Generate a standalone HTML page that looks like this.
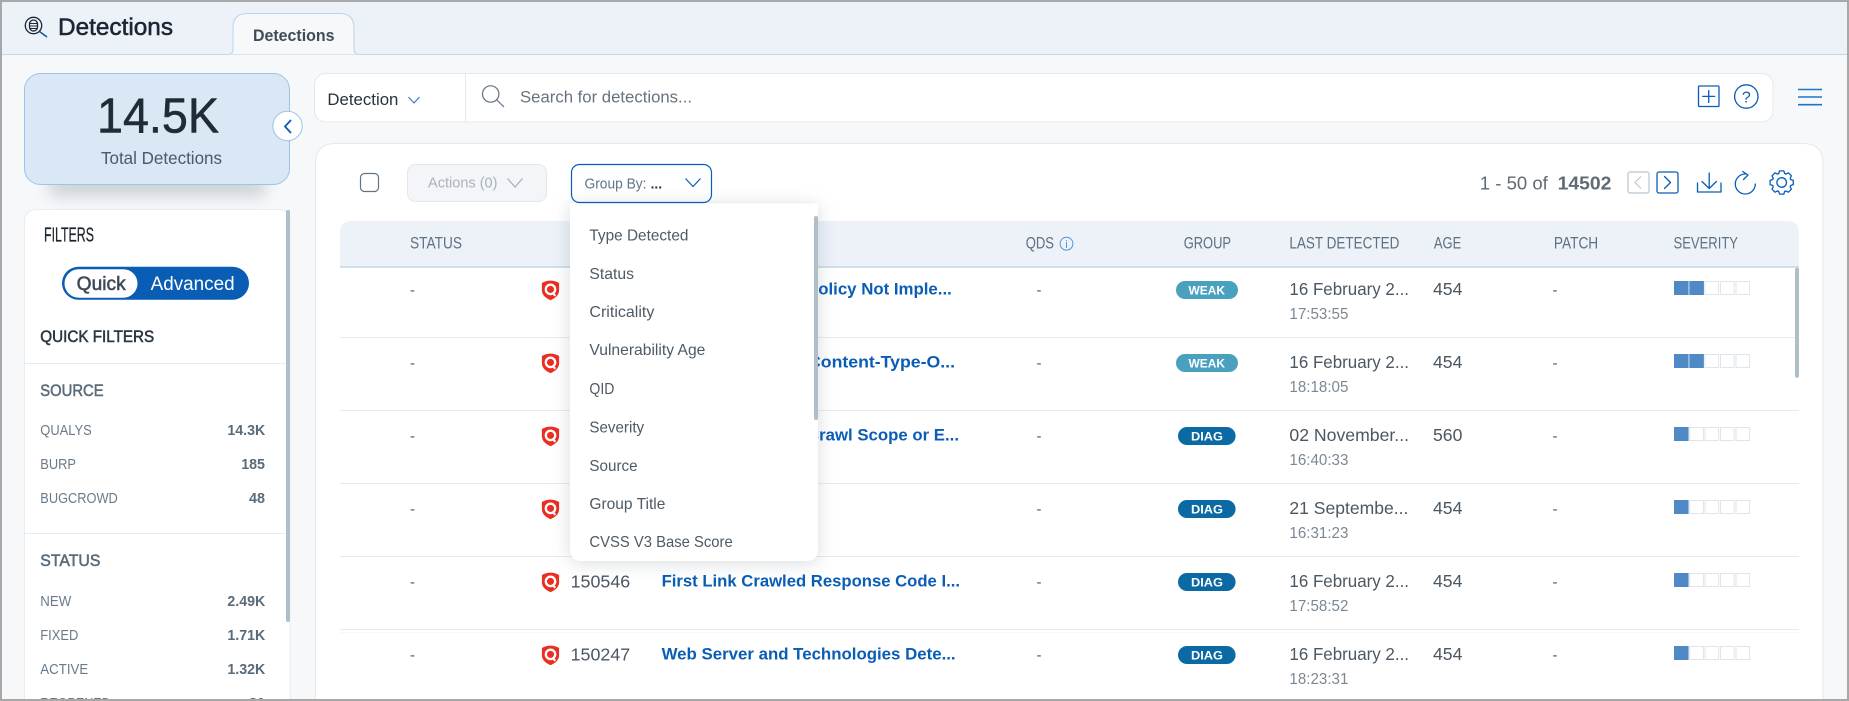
<!DOCTYPE html>
<html lang="en"><head><meta charset="utf-8"><title>Detections</title>
<style>
html,body{margin:0;padding:0;background:#f6f8fa;width:1849px;height:701px;overflow:hidden}
svg{display:block}
text{font-family:"Liberation Sans",Arial,sans-serif;white-space:pre}
.m{stroke:currentColor;stroke-width:.55px}
.hd{font-size:16.5px;fill:#5f7080}
.it{font-size:16px;fill:#4e5a66}
.tt{font-size:17px;font-weight:bold;fill:#0a5db5}
.qid{font-size:17.5px;fill:#4b5763}
.dt{font-size:17.5px;fill:#4b5763}
.tm{font-size:15.5px;fill:#7a8894}
.ds{font-size:15px;fill:#4b5763}
.bw{font-size:12px;font-weight:bold;fill:#fff}
.fl{font-size:14.5px;fill:#6b7a88}
.fv{font-size:14.5px;font-weight:bold;fill:#5a6b7a}
.fh{font-size:17px;fill:#5a6b7a;color:#5a6b7a}
.ic{fill:none;stroke:#0a5db5;stroke-width:1.3;stroke-linecap:round;stroke-linejoin:round}
.on{fill:#4f8ac6}.of{fill:#fff;stroke:#dfe5eb;stroke-width:1}
</style></head><body>
<svg width="1849" height="701" viewBox="0 0 1849 701" xmlns="http://www.w3.org/2000/svg">
<defs>
<filter id="b1" x="-30%" y="-100%" width="160%" height="300%"><feGaussianBlur stdDeviation="8"/></filter>
<g id="sh">
<path d="M0,-9.8C3.2,-9.8 6,-9 8.6,-7.4L8.6,0C8.6,4.8 4.4,8 0,9.8C-4.4,8 -8.6,4.8 -8.6,0L-8.6,-7.4C-6,-9 -3.2,-9.8 0,-9.8Z" fill="#ea2e22"/>
<circle cx="0" cy="-1" r="4.7" fill="none" stroke="#fff" stroke-width="2.3"/>
<path d="M2.2,2.6L4.8,5.4" stroke="#fff" stroke-width="2.1"/>
</g>
<path id="t" d="M-3,-9L-2.1,-11.6L2.1,-11.6L3,-9L4.24,-8.49"/>
<g id="b2"><rect x="0" y="0" width="14.6" height="14" class="on"/><rect x="15.3" y="0" width="14.6" height="14" class="on"/><rect x="31" y=".5" width="13.6" height="13" class="of"/><rect x="46.5" y=".5" width="13.6" height="13" class="of"/><rect x="62" y=".5" width="13.6" height="13" class="of"/></g>
<g id="b1s"><rect x="0" y="0" width="14.6" height="14" class="on"/><rect x="15.8" y=".5" width="13.6" height="13" class="of"/><rect x="31" y=".5" width="13.6" height="13" class="of"/><rect x="46.5" y=".5" width="13.6" height="13" class="of"/><rect x="62" y=".5" width="13.6" height="13" class="of"/></g>
</defs>

<!-- page -->
<rect width="1849" height="701" fill="#f6f8fa"/>
<rect x="0" y="0" width="1849" height="54" fill="#edf2f9"/>
<line x1="0" y1="54.5" x2="1849" y2="54.5" stroke="#c5d9ee"/>
<path d="M229,54.5Q233,54 233,48L233,28Q233,13.5 247,13.5L340,13.5Q354,13.5 354,28L354,48Q354,54 358,54.5Z" fill="#f6f8fa" stroke="#bcd3ea"/>
<line x1="230" y1="55" x2="357" y2="55" stroke="#f6f8fa" stroke-width="1"/>
<text x="253" y="41" font-size="17" font-weight="bold" fill="#3f4d5a" textLength="81.5" lengthAdjust="spacingAndGlyphs">Detections</text>
<text x="58" y="35" font-size="24.5" fill="#1c2733" color="#1c2733" class="m" textLength="115" lengthAdjust="spacingAndGlyphs">Detections</text>
<g fill="none" stroke="#1c2733" stroke-width="1.3">
<circle cx="33.5" cy="25.5" r="8.2"/><rect x="29.5" y="20" width="8" height="11" rx="4"/><path d="M30,23.5h7M30,26h7M30,28.5h7" stroke-width="1"/>
</g>
<path d="M39.5,31.5L47,37" stroke="#0a5db5" stroke-width="1.6" fill="none"/>

<!-- total card -->
<rect x="50" y="174" width="215" height="22" fill="#7f8b97" opacity=".36" filter="url(#b1)"/>
<rect x="24.5" y="73.5" width="265" height="111" rx="16" fill="#dae7f4" stroke="#9fc3e6"/>
<text x="97" y="132.5" font-size="48.7" fill="#1f2c38" color="#1f2c38" class="m" textLength="122" lengthAdjust="spacingAndGlyphs">14.5K</text>
<text x="101" y="164" font-size="17.5" fill="#4b5a68" textLength="121" lengthAdjust="spacingAndGlyphs">Total Detections</text>
<circle cx="287.5" cy="126" r="14.7" fill="#fff" stroke="#9fc3e6"/>
<path d="M291,120L285,126.5L291,133" fill="none" stroke="#0a5db5" stroke-width="1.8"/>

<!-- search bar -->
<rect x="314.5" y="73.5" width="1458.5" height="48.5" rx="11" fill="#fff" stroke="#e4e9ee"/>
<line x1="465.5" y1="74" x2="465.5" y2="122" stroke="#e4e9ee"/>
<text x="327.4" y="105" font-size="17" fill="#26323d" textLength="71" lengthAdjust="spacingAndGlyphs">Detection</text>
<path d="M408.5,97L414,103L419.5,97" fill="none" stroke="#3f7fc4" stroke-width="1.2"/>
<circle cx="490.7" cy="94" r="8.2" fill="none" stroke="#5f7080" stroke-width="1.2"/>
<path d="M496.8,100L504,107" stroke="#5f7080" stroke-width="1.2"/>
<text x="520" y="102.5" font-size="17" fill="#66737f" textLength="172" lengthAdjust="spacingAndGlyphs">Search for detections...</text>
<rect x="1698.5" y="86" width="20.5" height="20.5" class="ic" stroke-linejoin="miter" rx="1"/>
<path d="M1708.7,90.5V102.5M1702.7,96.4H1714.7" class="ic" stroke-width="1"/>
<circle cx="1746.3" cy="96.5" r="11.7" class="ic" stroke="#1e74c6"/>
<text x="1746.3" y="102.5" font-size="16" text-anchor="middle" fill="#0a5db5">?</text>
<path d="M1798,89.5H1822M1798,97H1822M1798,104.7H1822" fill="none" stroke="#1e74c6" stroke-width="1.6"/>

<!-- content panel -->
<path d="M315.5,720V163Q315.5,143.5 335.5,143.5H1803Q1823,143.5 1823,163V720Z" fill="#fff" stroke="#e4e9ee"/>
<rect x="360.5" y="173.5" width="18" height="18" rx="4" fill="#fff" stroke="#5f7589" stroke-width="1.2"/>
<rect x="407.5" y="164.5" width="139" height="37" rx="8" fill="#f3f5f8" stroke="#e4e8ed"/>
<text x="428" y="187.7" font-size="15" fill="#a9b2bb" textLength="69.5" lengthAdjust="spacingAndGlyphs">Actions (0)</text>
<path d="M507.5,178.5L515,187L522.5,178.5" fill="none" stroke="#a9b2bb" stroke-width="1.3"/>

<!-- pagination -->
<text x="1479.8" y="189.7" font-size="18" fill="#5f6b76" textLength="68" lengthAdjust="spacingAndGlyphs">1 - 50 of</text>
<text x="1557.6" y="189.7" font-size="18" font-weight="bold" fill="#5f6b76" textLength="53.8" lengthAdjust="spacingAndGlyphs">14502</text>
<rect x="1628" y="172" width="21" height="21" rx="2" fill="#fff" stroke="#b9c5d0" stroke-width="1.2"/>
<path d="M1641,176.5L1635,182.5L1641,188.5" fill="none" stroke="#b9c5d0" stroke-width="1.1"/>
<rect x="1657" y="172" width="21" height="21" rx="2" class="ic"/>
<path d="M1664.5,176.5L1670.5,182.5L1664.5,188.5" class="ic" stroke-width="1.1"/>
<path d="M1697.5,183V192H1721V183M1709.2,173V188.5M1702,181.5L1709.2,188.5L1716.4,181.5" class="ic" stroke-width="1.2" stroke="#1671c4"/>
<path d="M1745.3,174A10,10 0 1 0 1755.3,184" class="ic" stroke="#1e78c8" stroke-width="1.2"/>
<path d="M1742.7,171.5L1748,175L1743.5,179.5" class="ic" stroke="#1e78c8" stroke-width="1.2"/>
<g transform="translate(1781.7,182.5)" class="ic" stroke="#1671c4" stroke-width="1.2">
<use href="#t"/><use href="#t" transform="rotate(45)"/><use href="#t" transform="rotate(90)"/><use href="#t" transform="rotate(135)"/><use href="#t" transform="rotate(180)"/><use href="#t" transform="rotate(225)"/><use href="#t" transform="rotate(270)"/><use href="#t" transform="rotate(315)"/>
<circle r="4.8"/>
</g>

<!-- table header -->
<path d="M340,267V233Q340,221 352,221H1787Q1799,221 1799,233V267Z" fill="#edf2f9"/>
<line x1="340" y1="267" x2="1799" y2="267" stroke="#c5d5e6" stroke-width="1.5"/>
<text x="410" y="248.7" class="hd" textLength="52" lengthAdjust="spacingAndGlyphs">STATUS</text>
<text x="1025.7" y="248.7" class="hd" textLength="28.3" lengthAdjust="spacingAndGlyphs">QDS</text>
<circle cx="1066.5" cy="243.7" r="6.4" fill="none" stroke="#4f93d2" stroke-width="1"/>
<text x="1066.5" y="248" font-size="11" text-anchor="middle" fill="#4f93d2">i</text>
<text x="1183.7" y="248.7" class="hd" textLength="47.3" lengthAdjust="spacingAndGlyphs">GROUP</text>
<text x="1289.4" y="248.7" class="hd" textLength="110" lengthAdjust="spacingAndGlyphs">LAST DETECTED</text>
<text x="1433.9" y="248.7" class="hd" textLength="27.3" lengthAdjust="spacingAndGlyphs">AGE</text>
<text x="1553.9" y="248.7" class="hd" textLength="44.3" lengthAdjust="spacingAndGlyphs">PATCH</text>
<text x="1673.5" y="248.7" class="hd" textLength="64.5" lengthAdjust="spacingAndGlyphs">SEVERITY</text>

<!-- rows -->
<g stroke="#e6ebef" stroke-width="1">
<line x1="340" y1="337.5" x2="1799" y2="337.5"/><line x1="340" y1="410.5" x2="1799" y2="410.5"/><line x1="340" y1="483.5" x2="1799" y2="483.5"/><line x1="340" y1="556.5" x2="1799" y2="556.5"/><line x1="340" y1="629.5" x2="1799" y2="629.5"/>
<line x1="340" y1="632.5" x2="1799" y2="632.5" stroke="#f7f8fa"/>
</g>
<rect x="1795" y="267.7" width="4" height="110" rx="2" fill="#b0bec8"/>

<!-- row 1 -->
<text x="410" y="295" class="ds">-</text><use href="#sh" x="550.5" y="290.4"/>
<text x="807" y="294.7" class="tt" textLength="144.8" lengthAdjust="spacingAndGlyphs">Policy Not Imple...</text>
<text x="1036.5" y="295" class="ds">-</text>
<rect x="1176" y="281" width="62" height="18" rx="9" fill="#4aa1bf"/><text x="1188.5" y="294.5" class="bw" textLength="36.5" lengthAdjust="spacingAndGlyphs">WEAK</text>
<text x="1289.4" y="295" class="dt" textLength="119.6" lengthAdjust="spacingAndGlyphs">16 February 2...</text>
<text x="1289.4" y="319" class="tm" textLength="59" lengthAdjust="spacingAndGlyphs">17:53:55</text>
<text x="1433" y="295" class="dt" textLength="29.4" lengthAdjust="spacingAndGlyphs">454</text>
<text x="1552.5" y="295" class="ds">-</text><use href="#b2" x="1674" y="281"/>

<!-- row 2 -->
<text x="410" y="368" class="ds">-</text><use href="#sh" x="550.5" y="363.4"/>
<text x="808" y="367.7" class="tt" textLength="147" lengthAdjust="spacingAndGlyphs">Content-Type-O...</text>
<text x="1036.5" y="368" class="ds">-</text>
<rect x="1176" y="354" width="62" height="18" rx="9" fill="#4aa1bf"/><text x="1188.5" y="367.5" class="bw" textLength="36.5" lengthAdjust="spacingAndGlyphs">WEAK</text>
<text x="1289.4" y="368" class="dt" textLength="119.6" lengthAdjust="spacingAndGlyphs">16 February 2...</text>
<text x="1289.4" y="392" class="tm" textLength="59" lengthAdjust="spacingAndGlyphs">18:18:05</text>
<text x="1433" y="368" class="dt" textLength="29.4" lengthAdjust="spacingAndGlyphs">454</text>
<text x="1552.5" y="368" class="ds">-</text><use href="#b2" x="1674" y="354"/>

<!-- row 3 -->
<text x="410" y="441" class="ds">-</text><use href="#sh" x="550.5" y="436.4"/>
<text x="807" y="440.7" class="tt" textLength="152" lengthAdjust="spacingAndGlyphs">Crawl Scope or E...</text>
<text x="1036.5" y="441" class="ds">-</text>
<rect x="1178" y="427" width="57.6" height="18" rx="9" fill="#0b69a3"/><text x="1191" y="440.5" class="bw" textLength="32" lengthAdjust="spacingAndGlyphs">DIAG</text>
<text x="1289.4" y="441" class="dt" textLength="119.6" lengthAdjust="spacingAndGlyphs">02 November...</text>
<text x="1289.4" y="465" class="tm" textLength="59" lengthAdjust="spacingAndGlyphs">16:40:33</text>
<text x="1433" y="441" class="dt" textLength="29.4" lengthAdjust="spacingAndGlyphs">560</text>
<text x="1552.5" y="441" class="ds">-</text><use href="#b1s" x="1674" y="427"/>

<!-- row 4 -->
<text x="410" y="514" class="ds">-</text><use href="#sh" x="550.5" y="509.4"/>
<text x="1036.5" y="514" class="ds">-</text>
<rect x="1178" y="500" width="57.6" height="18" rx="9" fill="#0b69a3"/><text x="1191" y="513.5" class="bw" textLength="32" lengthAdjust="spacingAndGlyphs">DIAG</text>
<text x="1289.4" y="514" class="dt" textLength="119" lengthAdjust="spacingAndGlyphs">21 Septembe...</text>
<text x="1289.4" y="538" class="tm" textLength="59" lengthAdjust="spacingAndGlyphs">16:31:23</text>
<text x="1433" y="514" class="dt" textLength="29.4" lengthAdjust="spacingAndGlyphs">454</text>
<text x="1552.5" y="514" class="ds">-</text><use href="#b1s" x="1674" y="500"/>

<!-- row 5 -->
<text x="410" y="587" class="ds">-</text><use href="#sh" x="550.5" y="582.4"/>
<text x="570.6" y="587.3" class="qid" textLength="59.6" lengthAdjust="spacingAndGlyphs">150546</text>
<text x="661.6" y="586.7" class="tt" textLength="298.4" lengthAdjust="spacingAndGlyphs">First Link Crawled Response Code I...</text>
<text x="1036.5" y="587" class="ds">-</text>
<rect x="1178" y="573" width="57.6" height="18" rx="9" fill="#0b69a3"/><text x="1191" y="586.5" class="bw" textLength="32" lengthAdjust="spacingAndGlyphs">DIAG</text>
<text x="1289.4" y="587" class="dt" textLength="119.6" lengthAdjust="spacingAndGlyphs">16 February 2...</text>
<text x="1289.4" y="611" class="tm" textLength="59" lengthAdjust="spacingAndGlyphs">17:58:52</text>
<text x="1433" y="587" class="dt" textLength="29.4" lengthAdjust="spacingAndGlyphs">454</text>
<text x="1552.5" y="587" class="ds">-</text><use href="#b1s" x="1674" y="573"/>

<!-- row 6 -->
<text x="410" y="660" class="ds">-</text><use href="#sh" x="550.5" y="655.4"/>
<text x="570.6" y="660.3" class="qid" textLength="59.6" lengthAdjust="spacingAndGlyphs">150247</text>
<text x="661.6" y="659.7" class="tt" textLength="294" lengthAdjust="spacingAndGlyphs">Web Server and Technologies Dete...</text>
<text x="1036.5" y="660" class="ds">-</text>
<rect x="1178" y="646" width="57.6" height="18" rx="9" fill="#0b69a3"/><text x="1191" y="659.5" class="bw" textLength="32" lengthAdjust="spacingAndGlyphs">DIAG</text>
<text x="1289.4" y="660" class="dt" textLength="119.6" lengthAdjust="spacingAndGlyphs">16 February 2...</text>
<text x="1289.4" y="684" class="tm" textLength="59" lengthAdjust="spacingAndGlyphs">18:23:31</text>
<text x="1433" y="660" class="dt" textLength="29.4" lengthAdjust="spacingAndGlyphs">454</text>
<text x="1552.5" y="660" class="ds">-</text><use href="#b1s" x="1674" y="646"/>

<!-- group by -->
<rect x="571.5" y="164.5" width="140" height="38" rx="8" fill="#fff" stroke="#0a5db5" stroke-width="1.2"/>
<text x="584.5" y="188.3" font-size="14.5" fill="#5f7589" textLength="62" lengthAdjust="spacingAndGlyphs">Group By:</text>
<text x="650.6" y="188.3" font-size="14" font-weight="bold" fill="#26323d" textLength="11.4" lengthAdjust="spacingAndGlyphs">...</text>
<path d="M685.5,178.5L693,186.5L700.5,178.5" fill="none" stroke="#0a5db5" stroke-width="1.2"/>

<!-- dropdown -->
<path d="M570,203.5H818V549Q818,561 806,561H582Q570,561 570,549Z" fill="#fff" style="filter:drop-shadow(0 2px 9px rgba(60,75,90,.2))"/>
<text x="589.4" y="240.5" class="it" textLength="99" lengthAdjust="spacingAndGlyphs">Type Detected</text>
<text x="589.4" y="279" class="it" textLength="44.6" lengthAdjust="spacingAndGlyphs">Status</text>
<text x="589.4" y="317" class="it" textLength="65" lengthAdjust="spacingAndGlyphs">Criticality</text>
<text x="589.4" y="355" class="it" textLength="116" lengthAdjust="spacingAndGlyphs">Vulnerability Age</text>
<text x="589.4" y="394" class="it" textLength="25" lengthAdjust="spacingAndGlyphs">QID</text>
<text x="589.4" y="432.5" class="it" textLength="54.7" lengthAdjust="spacingAndGlyphs">Severity</text>
<text x="589.4" y="471" class="it" textLength="48.2" lengthAdjust="spacingAndGlyphs">Source</text>
<text x="589.4" y="509" class="it" textLength="76" lengthAdjust="spacingAndGlyphs">Group Title</text>
<text x="589.4" y="547" class="it" textLength="143.3" lengthAdjust="spacingAndGlyphs">CVSS V3 Base Score</text>
<rect x="814" y="216" width="4" height="204" rx="2" fill="#b0bec8"/>

<!-- sidebar -->
<path d="M24.5,720V222Q24.5,209.5 37,209.5H278Q290,209.5 290,222V720Z" fill="#fff" stroke="#e8ecf0"/>
<rect x="286" y="210" width="4" height="412" rx="2" fill="#b0bec8"/>
<text x="44" y="241.5" font-size="20.5" fill="#1a2530" color="#1a2530" class="m" style="stroke-width:.25px" textLength="50" lengthAdjust="spacingAndGlyphs">FILTERS</text>
<rect x="62" y="266.7" width="187" height="33" rx="16.5" fill="#0a5db5"/>
<rect x="64.5" y="269.2" width="73" height="28.5" rx="14.2" fill="#fff"/>
<text x="76.7" y="290" font-size="19" fill="#3d4a56" color="#3d4a56" class="m" textLength="49" lengthAdjust="spacingAndGlyphs">Quick</text>
<text x="150.6" y="290" font-size="19" fill="#fff" textLength="84" lengthAdjust="spacingAndGlyphs">Advanced</text>
<text x="40.3" y="342" font-size="16.5" fill="#2a3642" color="#2a3642" class="m" textLength="113.9" lengthAdjust="spacingAndGlyphs">QUICK FILTERS</text>
<line x1="25" y1="363.5" x2="286" y2="363.5" stroke="#e8ecf0"/>
<text x="40.3" y="396" class="fh m" textLength="63.3" lengthAdjust="spacingAndGlyphs">SOURCE</text>
<text x="40.3" y="435" class="fl" textLength="51.4" lengthAdjust="spacingAndGlyphs">QUALYS</text>
<text x="227.4" y="435" class="fv" textLength="37.9" lengthAdjust="spacingAndGlyphs">14.3K</text>
<text x="40.3" y="469" class="fl" textLength="35.7" lengthAdjust="spacingAndGlyphs">BURP</text>
<text x="241.2" y="469" class="fv" textLength="23.8" lengthAdjust="spacingAndGlyphs">185</text>
<text x="40.3" y="503" class="fl" textLength="77.5" lengthAdjust="spacingAndGlyphs">BUGCROWD</text>
<text x="249" y="503" class="fv" textLength="16" lengthAdjust="spacingAndGlyphs">48</text>
<line x1="25" y1="533.5" x2="286" y2="533.5" stroke="#e8ecf0"/>
<text x="40.3" y="566" class="fh m" textLength="60.1" lengthAdjust="spacingAndGlyphs">STATUS</text>
<text x="40.3" y="606" class="fl" textLength="30.9" lengthAdjust="spacingAndGlyphs">NEW</text>
<text x="227.4" y="606" class="fv" textLength="37.9" lengthAdjust="spacingAndGlyphs">2.49K</text>
<text x="40.3" y="640" class="fl" textLength="38" lengthAdjust="spacingAndGlyphs">FIXED</text>
<text x="227.4" y="640" class="fv" textLength="37.9" lengthAdjust="spacingAndGlyphs">1.71K</text>
<text x="40.3" y="674" class="fl" textLength="47.9" lengthAdjust="spacingAndGlyphs">ACTIVE</text>
<text x="227.4" y="674" class="fv" textLength="37.9" lengthAdjust="spacingAndGlyphs">1.32K</text>
<text x="40.3" y="708" class="fl" textLength="70.4" lengthAdjust="spacingAndGlyphs">REOPENED</text>
<text x="249" y="708" class="fv" textLength="16" lengthAdjust="spacingAndGlyphs">80</text>

<!-- window border -->
<rect x="1" y="1" width="1847" height="699" fill="none" stroke="#a8a8a8" stroke-width="2"/>
</svg>
</body></html>
